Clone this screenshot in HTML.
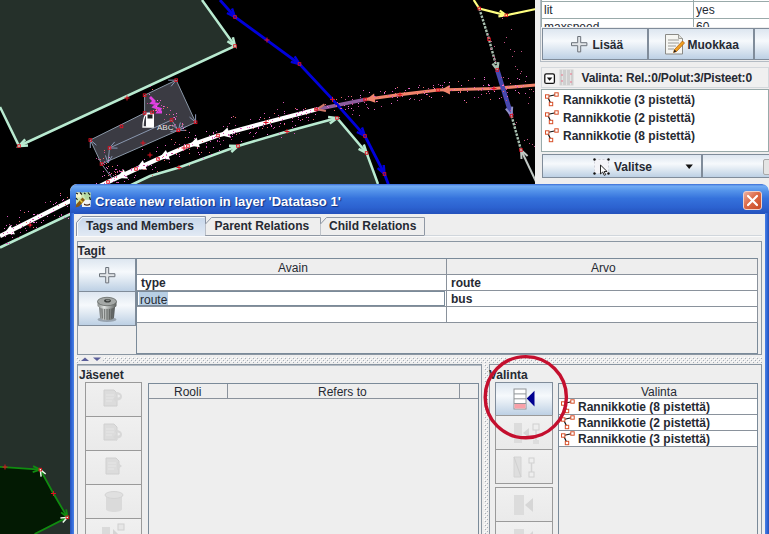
<!DOCTYPE html>
<html><head><meta charset="utf-8">
<style>
html,body{margin:0;padding:0;}
body{width:769px;height:534px;overflow:hidden;background:#000;position:relative;font-family:"Liberation Sans",sans-serif;font-size:12px;color:#262a33;}
.abs{position:absolute;}
#map{position:absolute;left:0;top:0;}
/* side panel */
#side{position:absolute;left:536px;top:0;width:233px;height:194px;background:#eeeeee;}
.btn{position:absolute;box-sizing:border-box;border:1px solid #808c9a;background:linear-gradient(#dde6f0 0%,#f6f9fc 40%,#e4ecf4 60%,#bdd0e4 100%);}
.btn.dis{background:linear-gradient(#f0f0f0,#eaeaea);border-color:#9a9a9a;}
.b{font-weight:bold;}
.t{position:absolute;white-space:nowrap;line-height:14px;}
/* dialog */
#dlg{position:absolute;left:70px;top:184px;width:699px;height:360px;background:#eeeeee;border-radius:7px 7px 0 0;overflow:hidden;}
#title{position:absolute;left:0;top:0;right:0;height:30px;border-radius:7px 7px 0 0;background:linear-gradient(#3a6cd4 0%,#72acf4 7%,#5594ea 22%,#3572dc 48%,#2c62d0 78%,#2452bc 100%);}
#bl{position:absolute;left:0;top:29px;width:4px;bottom:0;background:linear-gradient(90deg,#2450b8,#3068d8 50%,#4a80e4);}
#br{position:absolute;right:0;top:29px;width:4px;bottom:0;background:linear-gradient(90deg,#4a80e4,#3068d8 50%,#2450b8);}
.hline{position:absolute;height:1px;background:#8a929c;}
.vline{position:absolute;width:1px;background:#8a929c;}
.dots{background-color:#eeeeee;background-image:radial-gradient(#b4bcc6 0.7px,transparent 0.9px),radial-gradient(#fff 0.7px,transparent 0.9px);background-size:4px 4px,4px 4px;background-position:0 0,2px 2px;}
#side svg{z-index:3}
.white{position:absolute;background:#fff;}
</style></head><body>
<svg width="0" height="0" style="position:absolute"><defs>
<pattern id="bump" width="4" height="4" patternUnits="userSpaceOnUse"><rect width="4" height="4" fill="#eeeeee"/><rect x="0" y="0" width="1" height="1" fill="#ffffff"/><rect x="1" y="1" width="1" height="1" fill="#a4acb6"/><rect x="2" y="2" width="1" height="1" fill="#ffffff"/><rect x="3" y="3" width="1" height="1" fill="#a4acb6"/></pattern>
<g id="way"><path d="M3.500 4.500L12.500 2.500M3.500 4.500L7 12" stroke="#111" stroke-width="1.200" fill="none"/><rect x="1.500" y="2.800" width="3.400" height="3.400" fill="#fff" stroke="#d8502a" stroke-width="1"/><rect x="10.800" y="0.800" width="3.400" height="3.400" fill="#fff" stroke="#d8502a" stroke-width="1"/><rect x="5.300" y="10.300" width="3.400" height="3.400" fill="#fff" stroke="#d8502a" stroke-width="1"/></g>
<g id="pg"><path d="M1 2h10l3 3v13h-13z" fill="#dcdcdc" stroke="#d0d0d0" stroke-width="1"/><path d="M3 7h8M3 10h8M3 13h6" stroke="#e6e6e6"/></g>
<g id="plus"><path d="M6.700 0.500h3v6.200h6.200v3h-6.200v6.200h-3v-6.200h-6.200v-3h6.200z" fill="#e2e5e8" stroke="#6c727a" stroke-width="1"/></g>
</defs></svg>
<svg id="map" width="769" height="534" viewBox="0 0 769 534">
<rect width="769" height="534" fill="#000"/>
<polygon points="0,0 202,0 235,46 19,146 0,107" fill="#25302a"/>
<polygon points="0.0,247.5 150.0,176.0 179.0,167.5 238.0,146.0 287.0,131.5 337.0,118.0 366.6,153.0 378.0,184.0 378,534 0,534" fill="#25302a"/>
<polygon points="0,466.8 40.3,469.6 53.4,493.5 67.4,517.3 34.6,534 0,534" fill="#031a03"/>
<polygon points="90.3,140.0 144.6,113.0 144.6,95.2 176.2,80.1 195.6,122.3 178.4,130.3 101.5,164.0" fill="#3b3b43" stroke="#8a98a8" stroke-width="1"/>
<g stroke="#8a98b0" stroke-width="1" fill="none"><path d="M109.5 148L171.5 120M109.500 148L108 163M171.500 120L178.400 130.300M144.600 113L152 112M101.500 164L112 178"/></g>
<polyline points="117.5,148.1 109.5,148.0 114.7,141.9" fill="none" stroke="#8a98b8" stroke-width="1"/>
<polyline points="168.2,80.2 176.2,80.1 171.1,86.3" fill="none" stroke="#8a98b8" stroke-width="1"/>
<polyline points="195.6,114.3 195.6,122.3 189.5,117.1" fill="none" stroke="#8a98b8" stroke-width="1"/>
<polyline points="186.4,130.3 178.4,130.3 183.5,124.2" fill="none" stroke="#8a98b8" stroke-width="1"/>
<polyline points="90.3,148.0 90.3,140.0 96.4,145.1" fill="none" stroke="#8a98b8" stroke-width="1"/>
<polyline points="112.1,156.1 108.0,163.0 105.4,155.4" fill="none" stroke="#8a98b8" stroke-width="1"/>
<polyline points="185.6,126.8 178.4,130.3 180.4,122.5" fill="none" stroke="#8a98b8" stroke-width="1"/>
<polyline points="172.4,125.0 178.4,130.3 170.5,131.5" fill="none" stroke="#8a98b8" stroke-width="1"/>
<polyline points="202.0,0.0 235.0,46.0 19.0,146.0 0.0,107.0" fill="none" stroke="#b8ead0" stroke-width="2.5"/>
<polyline points="232.9,37.3 235.0,46.0 227.4,41.2" fill="none" stroke="#b8ead0" stroke-width="2.5"/>
<polyline points="28.0,145.6 19.0,146.0 25.2,139.4" fill="none" stroke="#b8ead0" stroke-width="2.5"/>
<polyline points="0.0,247.5 150.0,176.0 179.0,167.5 238.0,146.0 287.0,131.5 337.0,118.0 366.6,153.0 378.0,184.0" fill="none" stroke="#b8ead0" stroke-width="2.5"/>
<polyline points="229.0,145.7 238.0,146.0 231.3,152.0" fill="none" stroke="#b8ead0" stroke-width="2.5"/>
<polyline points="328.1,116.9 337.0,118.0 329.8,123.4" fill="none" stroke="#b8ead0" stroke-width="2.5"/>
<polyline points="363.8,144.5 366.6,153.0 358.6,148.8" fill="none" stroke="#b8ead0" stroke-width="2.5"/>
<polyline points="316.0,109.5 266.0,122.5 218.0,135.5 188.0,146.0 158.0,159.0 108.0,182.0 0.0,236.0" fill="none" stroke="#ffffff" stroke-width="4.2"/>
<polygon points="230.2,137.5 219.5,135.0 227.5,127.5" fill="#ffffff"/>
<polygon points="199.9,147.3 189.0,145.6 196.5,137.5" fill="#ffffff"/>
<polygon points="170.0,159.4 159.0,158.5 165.9,149.9" fill="#ffffff"/>
<polygon points="147.0,169.7 136.0,169.0 142.7,160.3" fill="#ffffff"/>
<polygon points="128.0,178.5 117.0,178.0 123.6,169.2" fill="#ffffff"/>
<polygon points="15.0,234.3 4.0,234.0 10.4,225.0" fill="#ffffff"/>
<polyline points="316,109.5 365,99.5" fill="none" stroke="#8c5c9c" stroke-width="3.6"/>
<polyline points="325.9,110.9 317.0,109.3 324.5,104.3" fill="none" stroke="#d07868" stroke-width="2"/>
<polyline points="536.0,85.0 494.0,88.5 438.0,90.0 400.0,94.7 365.0,99.5" fill="none" stroke="#f0846c" stroke-width="3.2"/>
<polygon points="450.0,94.4 441.0,90.0 449.7,85.1" fill="#f0846c"/>
<polygon points="375.4,102.8 366.0,99.4 374.1,93.5" fill="#f0846c"/>
<polyline points="220.0,0.0 235.0,17.0 299.5,64.0 332.5,99.4 365.0,136.0 384.5,174.0 389.0,186.0" fill="none" stroke="#0000dc" stroke-width="2.8"/>
<polyline points="232.0,8.5 235.0,17.0 227.0,13.0" fill="none" stroke="#0000dc" stroke-width="2.4"/>
<polyline points="294.7,56.4 299.5,64.0 290.8,61.8" fill="none" stroke="#0000dc" stroke-width="2.4"/>
<polyline points="362.0,127.5 365.0,136.0 356.9,132.0" fill="none" stroke="#0000dc" stroke-width="2.4"/>
<polyline points="383.7,165.0 384.5,174.0 377.7,168.1" fill="none" stroke="#0000dc" stroke-width="2.4"/>
<polyline points="473.7,0.0 479.3,8.5 506.3,15.3 536.0,9.0" fill="none" stroke="#ffff80" stroke-width="2.2"/>
<polyline points="499.8,10.6 506.3,15.3 498.4,16.4" fill="none" stroke="#ffff80" stroke-width="2.2"/>
<polyline points="479.3,8.5 489.0,39.3 497.3,70.0" fill="none" stroke="#a8c0b0" stroke-width="2.4" stroke-dasharray="2.5 1.2"/>
<polyline points="498.3,62.1 497.3,70.0 492.5,63.6" fill="none" stroke="#a8c0b0" stroke-width="2.4"/>
<polyline points="497.3,70 511.5,115.7" fill="none" stroke="#4848b0" stroke-width="4.5"/>
<polyline points="512.2,106.7 511.5,115.7 505.8,108.7" fill="none" stroke="#9090c8" stroke-width="2"/>
<polyline points="511.5,115.7 521.0,150.0" fill="none" stroke="#a8c0b0" stroke-width="2.4" stroke-dasharray="2.5 1.2"/>
<polyline points="540.0,190.0 521.0,150.0" fill="none" stroke="#c0c8c4" stroke-width="2"/>
<polyline points="521.5,159.0 521.0,150.0 527.6,156.1" fill="none" stroke="#c0c8c4" stroke-width="2"/>
<polyline points="0.0,466.8 40.3,469.6 53.4,493.5 67.4,517.3 34.6,534.0" fill="none" stroke="#108c10" stroke-width="1.8"/>
<polyline points="33.1,466.1 40.3,469.6 32.7,472.1" fill="none" stroke="#108c10" stroke-width="1.8"/>
<polyline points="66.2,509.4 67.4,517.3 61.1,512.4" fill="none" stroke="#108c10" stroke-width="1.8"/>
<polyline points="41.1,476.6 40.3,469.6 45.7,474.0" fill="none" stroke="#e8ffe8" stroke-width="1.5"/>
<polyline points="60.4,517.9 67.4,517.3 62.8,522.6" fill="none" stroke="#e8ffe8" stroke-width="1.5"/>
<path d="M150 97l4 4-2 2 5 1-3 3 6 2-2 3 4 0" fill="none" stroke="#e040e0" stroke-width="2.8"/>
<g><rect x="146" y="113" width="8" height="14" rx="1" fill="#fff"/><rect x="147.500" y="114.500" width="5" height="4" fill="#222"/><path d="M146 114q-3 5-3 13h11" fill="none" stroke="#fff" stroke-width="1.300"/></g>
<text x="157" y="130" font-family="Liberation Sans, sans-serif" font-size="8" fill="#e8e8e8">ABC</text>
<g><rect x="213" y="147" width="1" height="1" fill="#f070d0"/><rect x="288" y="114" width="1" height="1" fill="#c04890"/><rect x="296" y="114" width="1" height="1" fill="#e060c0"/><rect x="176" y="153" width="1" height="1" fill="#c04890"/><rect x="178" y="148" width="1" height="1" fill="#e86868"/><rect x="235" y="117" width="1" height="1" fill="#e86868"/><rect x="303" y="109" width="1" height="1" fill="#d050b0"/><rect x="271" y="126" width="1" height="1" fill="#f070d0"/><rect x="59" y="216" width="1" height="1" fill="#e060c0"/><rect x="298" y="117" width="1" height="1" fill="#f070d0"/><rect x="124" y="175" width="1" height="1" fill="#d050b0"/><rect x="62" y="200" width="1" height="1" fill="#d050b0"/><rect x="122" y="169" width="1" height="1" fill="#c04890"/><rect x="271" y="125" width="1" height="1" fill="#e060c0"/><rect x="265" y="123" width="1" height="1" fill="#e060c0"/><rect x="102" y="176" width="1" height="1" fill="#e060c0"/><rect x="36" y="227" width="1" height="1" fill="#e060c0"/><rect x="120" y="171" width="1" height="1" fill="#e86868"/><rect x="53" y="209" width="1" height="1" fill="#f070d0"/><rect x="116" y="182" width="1" height="1" fill="#c04890"/><rect x="217" y="141" width="1" height="1" fill="#c04890"/><rect x="306" y="112" width="1" height="1" fill="#e060c0"/><rect x="284" y="124" width="1" height="1" fill="#e86868"/><rect x="273" y="128" width="1" height="1" fill="#c04890"/><rect x="43" y="220" width="1" height="1" fill="#e060c0"/><rect x="144" y="159" width="1" height="1" fill="#e060c0"/><rect x="41" y="222" width="1" height="1" fill="#f070d0"/><rect x="206" y="131" width="1" height="1" fill="#f070d0"/><rect x="267" y="127" width="1" height="1" fill="#e86868"/><rect x="233" y="131" width="1" height="1" fill="#d050b0"/><rect x="234" y="133" width="1" height="1" fill="#e060c0"/><rect x="185" y="137" width="1" height="1" fill="#e86868"/><rect x="186" y="148" width="1" height="1" fill="#c04890"/><rect x="113" y="181" width="1" height="1" fill="#d050b0"/><rect x="249" y="133" width="1" height="1" fill="#c04890"/><rect x="301" y="114" width="1" height="1" fill="#d050b0"/><rect x="282" y="119" width="1" height="1" fill="#f070d0"/><rect x="37" y="214" width="1" height="1" fill="#d050b0"/><rect x="230" y="137" width="1" height="1" fill="#d050b0"/><rect x="283" y="102" width="1" height="1" fill="#d050b0"/><rect x="162" y="157" width="1" height="1" fill="#e060c0"/><rect x="280" y="123" width="1" height="1" fill="#f070d0"/><rect x="53" y="211" width="1" height="1" fill="#f070d0"/><rect x="13" y="228" width="1" height="1" fill="#e060c0"/><rect x="145" y="169" width="1" height="1" fill="#e86868"/><rect x="11" y="225" width="1" height="1" fill="#e060c0"/><rect x="228" y="135" width="1" height="1" fill="#e060c0"/><rect x="63" y="199" width="1" height="1" fill="#f070d0"/><rect x="209" y="152" width="1" height="1" fill="#e86868"/><rect x="9" y="224" width="1" height="1" fill="#c04890"/><rect x="55" y="203" width="1" height="1" fill="#e060c0"/><rect x="147" y="165" width="1" height="1" fill="#e060c0"/><rect x="306" y="117" width="1" height="1" fill="#d050b0"/><rect x="30" y="225" width="1" height="1" fill="#f070d0"/><rect x="197" y="148" width="1" height="1" fill="#e060c0"/><rect x="253" y="136" width="1" height="1" fill="#d050b0"/><rect x="33" y="214" width="1" height="1" fill="#f070d0"/><rect x="107" y="180" width="1" height="1" fill="#e86868"/><rect x="110" y="178" width="1" height="1" fill="#e86868"/><rect x="61" y="215" width="1" height="1" fill="#c04890"/><rect x="5" y="236" width="1" height="1" fill="#e060c0"/><rect x="16" y="224" width="1" height="1" fill="#c04890"/><rect x="279" y="133" width="1" height="1" fill="#f070d0"/><rect x="64" y="217" width="1" height="1" fill="#f070d0"/><rect x="4" y="228" width="1" height="1" fill="#f070d0"/><rect x="139" y="169" width="1" height="1" fill="#c04890"/><rect x="6" y="225" width="1" height="1" fill="#e060c0"/><rect x="12" y="232" width="1" height="1" fill="#f070d0"/><rect x="54" y="215" width="1" height="1" fill="#c04890"/><rect x="220" y="144" width="1" height="1" fill="#c04890"/><rect x="228" y="134" width="1" height="1" fill="#d050b0"/><rect x="25" y="228" width="1" height="1" fill="#c04890"/><rect x="131" y="169" width="1" height="1" fill="#d050b0"/><rect x="20" y="223" width="1" height="1" fill="#d050b0"/><rect x="151" y="165" width="1" height="1" fill="#e060c0"/><rect x="263" y="126" width="1" height="1" fill="#c04890"/><rect x="252" y="126" width="1" height="1" fill="#d050b0"/><rect x="134" y="177" width="1" height="1" fill="#e060c0"/><rect x="137" y="166" width="1" height="1" fill="#d050b0"/><rect x="135" y="175" width="1" height="1" fill="#d050b0"/><rect x="64" y="201" width="1" height="1" fill="#e060c0"/><rect x="114" y="177" width="1" height="1" fill="#e86868"/><rect x="166" y="154" width="1" height="1" fill="#f070d0"/><rect x="41" y="215" width="1" height="1" fill="#d050b0"/><rect x="143" y="165" width="1" height="1" fill="#c04890"/><rect x="274" y="127" width="1" height="1" fill="#e060c0"/><rect x="292" y="118" width="1" height="1" fill="#c04890"/><rect x="103" y="171" width="1" height="1" fill="#e060c0"/><rect x="264" y="113" width="1" height="1" fill="#e060c0"/><rect x="277" y="109" width="1" height="1" fill="#c04890"/><rect x="247" y="127" width="1" height="1" fill="#f070d0"/><rect x="165" y="158" width="1" height="1" fill="#f070d0"/><rect x="258" y="127" width="1" height="1" fill="#d050b0"/><rect x="206" y="146" width="1" height="1" fill="#c04890"/><rect x="176" y="154" width="1" height="1" fill="#e060c0"/><rect x="114" y="179" width="1" height="1" fill="#f070d0"/><rect x="7" y="216" width="1" height="1" fill="#d050b0"/><rect x="281" y="120" width="1" height="1" fill="#f070d0"/><rect x="67" y="206" width="1" height="1" fill="#d050b0"/><rect x="184" y="144" width="1" height="1" fill="#e060c0"/><rect x="236" y="145" width="1" height="1" fill="#d050b0"/><rect x="131" y="168" width="1" height="1" fill="#c04890"/><rect x="295" y="108" width="1" height="1" fill="#e86868"/><rect x="298" y="112" width="1" height="1" fill="#d050b0"/><rect x="68" y="213" width="1" height="1" fill="#c04890"/><rect x="297" y="109" width="1" height="1" fill="#d050b0"/><rect x="195" y="135" width="1" height="1" fill="#f070d0"/><rect x="231" y="139" width="1" height="1" fill="#c04890"/><rect x="239" y="133" width="1" height="1" fill="#c04890"/><rect x="300" y="120" width="1" height="1" fill="#d050b0"/><rect x="216" y="131" width="1" height="1" fill="#d050b0"/><rect x="155" y="167" width="1" height="1" fill="#e060c0"/><rect x="310" y="112" width="1" height="1" fill="#f070d0"/><rect x="163" y="156" width="1" height="1" fill="#e86868"/><rect x="51" y="212" width="1" height="1" fill="#f070d0"/><rect x="47" y="216" width="1" height="1" fill="#f070d0"/><rect x="50" y="201" width="1" height="1" fill="#d050b0"/><rect x="183" y="150" width="1" height="1" fill="#f070d0"/><rect x="279" y="126" width="1" height="1" fill="#c04890"/><rect x="232" y="134" width="1" height="1" fill="#e060c0"/><rect x="53" y="204" width="1" height="1" fill="#f070d0"/><rect x="223" y="140" width="1" height="1" fill="#c04890"/><rect x="169" y="162" width="1" height="1" fill="#c04890"/><rect x="240" y="128" width="1" height="1" fill="#e060c0"/><rect x="214" y="137" width="1" height="1" fill="#d050b0"/><rect x="186" y="146" width="1" height="1" fill="#e86868"/><rect x="249" y="127" width="1" height="1" fill="#e060c0"/><rect x="232" y="136" width="1" height="1" fill="#d050b0"/><rect x="306" y="114" width="1" height="1" fill="#e86868"/><rect x="235" y="125" width="1" height="1" fill="#c04890"/><rect x="34" y="222" width="1" height="1" fill="#f070d0"/><rect x="9" y="243" width="1" height="1" fill="#e060c0"/><rect x="28" y="211" width="1" height="1" fill="#f070d0"/><rect x="61" y="214" width="1" height="1" fill="#d050b0"/><rect x="156" y="151" width="1" height="1" fill="#f070d0"/><rect x="45" y="202" width="1" height="1" fill="#c04890"/><rect x="96" y="183" width="1" height="1" fill="#f070d0"/><rect x="308" y="117" width="1" height="1" fill="#d050b0"/><rect x="284" y="111" width="1" height="1" fill="#d050b0"/><rect x="109" y="172" width="1" height="1" fill="#e060c0"/><rect x="164" y="160" width="1" height="1" fill="#c04890"/><rect x="236" y="134" width="1" height="1" fill="#f070d0"/><rect x="3" y="233" width="1" height="1" fill="#c04890"/><rect x="157" y="147" width="1" height="1" fill="#d050b0"/><rect x="116" y="176" width="1" height="1" fill="#e060c0"/><rect x="267" y="134" width="1" height="1" fill="#f070d0"/><rect x="215" y="136" width="1" height="1" fill="#d050b0"/><rect x="295" y="125" width="1" height="1" fill="#e060c0"/><rect x="144" y="165" width="1" height="1" fill="#c04890"/><rect x="279" y="117" width="1" height="1" fill="#e86868"/><rect x="7" y="232" width="1" height="1" fill="#f070d0"/><rect x="171" y="139" width="1" height="1" fill="#e86868"/><rect x="169" y="159" width="1" height="1" fill="#d050b0"/><rect x="18" y="237" width="1" height="1" fill="#c04890"/><rect x="259" y="119" width="1" height="1" fill="#e060c0"/><rect x="274" y="113" width="1" height="1" fill="#e86868"/><rect x="34" y="214" width="1" height="1" fill="#f070d0"/><rect x="30" y="221" width="1" height="1" fill="#d050b0"/><rect x="310" y="110" width="1" height="1" fill="#f070d0"/><rect x="219" y="141" width="1" height="1" fill="#c04890"/><rect x="212" y="137" width="1" height="1" fill="#e060c0"/><rect x="20" y="210" width="1" height="1" fill="#c04890"/><rect x="217" y="140" width="1" height="1" fill="#d050b0"/><rect x="-3" y="232" width="1" height="1" fill="#f070d0"/><rect x="176" y="153" width="1" height="1" fill="#e86868"/><rect x="284" y="113" width="1" height="1" fill="#d050b0"/><rect x="20" y="232" width="1" height="1" fill="#d050b0"/><rect x="152" y="169" width="1" height="1" fill="#d050b0"/><rect x="19" y="221" width="1" height="1" fill="#e86868"/><rect x="121" y="171" width="1" height="1" fill="#d050b0"/><rect x="138" y="166" width="1" height="1" fill="#d050b0"/><rect x="26" y="230" width="1" height="1" fill="#d050b0"/><rect x="201" y="152" width="1" height="1" fill="#e86868"/><rect x="7" y="243" width="1" height="1" fill="#e060c0"/><rect x="213" y="133" width="1" height="1" fill="#e060c0"/><rect x="262" y="128" width="1" height="1" fill="#e86868"/><rect x="26" y="222" width="1" height="1" fill="#c04890"/><rect x="33" y="222" width="1" height="1" fill="#f070d0"/><rect x="270" y="124" width="1" height="1" fill="#d050b0"/><rect x="206" y="143" width="1" height="1" fill="#d050b0"/><rect x="223" y="126" width="1" height="1" fill="#d050b0"/><rect x="143" y="169" width="1" height="1" fill="#e86868"/><rect x="294" y="133" width="1" height="1" fill="#d050b0"/><rect x="268" y="120" width="1" height="1" fill="#e86868"/><rect x="43" y="220" width="1" height="1" fill="#f070d0"/><rect x="230" y="136" width="1" height="1" fill="#d050b0"/><rect x="19" y="217" width="1" height="1" fill="#e060c0"/><rect x="315" y="114" width="1" height="1" fill="#e060c0"/><rect x="26" y="222" width="1" height="1" fill="#e86868"/><rect x="308" y="120" width="1" height="1" fill="#c04890"/><rect x="60" y="195" width="1" height="1" fill="#e060c0"/><rect x="236" y="134" width="1" height="1" fill="#e86868"/><rect x="142" y="149" width="1" height="1" fill="#f070d0"/><rect x="166" y="155" width="1" height="1" fill="#f070d0"/><rect x="68" y="218" width="1" height="1" fill="#f070d0"/><rect x="229" y="123" width="1" height="1" fill="#c04890"/><rect x="284" y="123" width="1" height="1" fill="#e060c0"/><rect x="125" y="176" width="1" height="1" fill="#e060c0"/><rect x="126" y="176" width="1" height="1" fill="#c04890"/><rect x="172" y="153" width="1" height="1" fill="#c04890"/><rect x="32" y="219" width="1" height="1" fill="#d050b0"/><rect x="241" y="128" width="1" height="1" fill="#f070d0"/><rect x="219" y="138" width="1" height="1" fill="#d050b0"/><rect x="104" y="183" width="1" height="1" fill="#d050b0"/><rect x="302" y="119" width="1" height="1" fill="#e86868"/><rect x="6" y="243" width="1" height="1" fill="#f070d0"/><rect x="241" y="141" width="1" height="1" fill="#e060c0"/><rect x="223" y="133" width="1" height="1" fill="#d050b0"/><rect x="255" y="133" width="1" height="1" fill="#f070d0"/><rect x="189" y="165" width="1" height="1" fill="#e86868"/><rect x="270" y="122" width="1" height="1" fill="#e86868"/><rect x="194" y="138" width="1" height="1" fill="#e060c0"/><rect x="211" y="154" width="1" height="1" fill="#f070d0"/><rect x="189" y="149" width="1" height="1" fill="#e86868"/><rect x="263" y="124" width="1" height="1" fill="#c04890"/><rect x="202" y="141" width="1" height="1" fill="#e86868"/><rect x="12" y="237" width="1" height="1" fill="#e060c0"/><rect x="56" y="202" width="1" height="1" fill="#e060c0"/><rect x="296" y="115" width="1" height="1" fill="#f070d0"/><rect x="26" y="230" width="1" height="1" fill="#d050b0"/><rect x="36" y="222" width="1" height="1" fill="#f070d0"/><rect x="58" y="205" width="1" height="1" fill="#c04890"/><rect x="313" y="119" width="1" height="1" fill="#e86868"/><rect x="231" y="117" width="1" height="1" fill="#e060c0"/><rect x="203" y="158" width="1" height="1" fill="#f070d0"/><rect x="212" y="138" width="1" height="1" fill="#e060c0"/><rect x="20" y="228" width="1" height="1" fill="#c04890"/><rect x="171" y="153" width="1" height="1" fill="#c04890"/><rect x="189" y="153" width="1" height="1" fill="#e86868"/><rect x="158" y="158" width="1" height="1" fill="#e060c0"/><rect x="60" y="193" width="1" height="1" fill="#e86868"/><rect x="67" y="197" width="1" height="1" fill="#e86868"/><rect x="206" y="147" width="1" height="1" fill="#d050b0"/><rect x="292" y="127" width="1" height="1" fill="#e060c0"/><rect x="235" y="132" width="1" height="1" fill="#d050b0"/><rect x="39" y="218" width="1" height="1" fill="#e060c0"/><rect x="292" y="121" width="1" height="1" fill="#d050b0"/><rect x="175" y="142" width="1" height="1" fill="#e86868"/><rect x="278" y="115" width="1" height="1" fill="#d050b0"/><rect x="128" y="179" width="1" height="1" fill="#d050b0"/><rect x="250" y="132" width="1" height="1" fill="#e060c0"/><rect x="269" y="117" width="1" height="1" fill="#f070d0"/><rect x="198" y="152" width="1" height="1" fill="#f070d0"/><rect x="152" y="175" width="1" height="1" fill="#e86868"/><rect x="108" y="183" width="1" height="1" fill="#e060c0"/><rect x="165" y="145" width="1" height="1" fill="#e060c0"/><rect x="30" y="224" width="1" height="1" fill="#e060c0"/><rect x="281" y="137" width="1" height="1" fill="#d050b0"/><rect x="131" y="170" width="1" height="1" fill="#f070d0"/><rect x="38" y="217" width="1" height="1" fill="#e060c0"/><rect x="122" y="171" width="1" height="1" fill="#e86868"/><rect x="197" y="147" width="1" height="1" fill="#e86868"/><rect x="227" y="126" width="1" height="1" fill="#c04890"/><rect x="253" y="128" width="1" height="1" fill="#e86868"/><rect x="250" y="119" width="1" height="1" fill="#d050b0"/><rect x="298" y="119" width="1" height="1" fill="#c04890"/><rect x="137" y="166" width="1" height="1" fill="#e060c0"/><rect x="260" y="117" width="1" height="1" fill="#f070d0"/><rect x="219" y="150" width="1" height="1" fill="#e060c0"/><rect x="209" y="135" width="1" height="1" fill="#d050b0"/><rect x="189" y="132" width="1" height="1" fill="#e060c0"/><rect x="199" y="154" width="1" height="1" fill="#f070d0"/><rect x="258" y="128" width="1" height="1" fill="#e060c0"/><rect x="179" y="144" width="1" height="1" fill="#c04890"/><rect x="33" y="219" width="1" height="1" fill="#c04890"/><rect x="305" y="108" width="1" height="1" fill="#e86868"/><rect x="33" y="227" width="1" height="1" fill="#e86868"/><rect x="192" y="144" width="1" height="1" fill="#f070d0"/><rect x="213" y="132" width="1" height="1" fill="#e060c0"/><rect x="272" y="120" width="1" height="1" fill="#e060c0"/><rect x="11" y="234" width="1" height="1" fill="#e060c0"/><rect x="22" y="226" width="1" height="1" fill="#c04890"/><rect x="302" y="111" width="1" height="1" fill="#d050b0"/><rect x="24" y="212" width="1" height="1" fill="#e86868"/><rect x="264" y="118" width="1" height="1" fill="#e86868"/><rect x="188" y="137" width="1" height="1" fill="#d050b0"/><rect x="256" y="132" width="1" height="1" fill="#d050b0"/><rect x="146" y="166" width="1" height="1" fill="#d050b0"/><rect x="233" y="116" width="1" height="1" fill="#e86868"/><rect x="296" y="109" width="1" height="1" fill="#c04890"/><rect x="304" y="110" width="1" height="1" fill="#c04890"/><rect x="117" y="172" width="1" height="1" fill="#d050b0"/><rect x="210" y="141" width="1" height="1" fill="#e060c0"/><rect x="174" y="144" width="1" height="1" fill="#c04890"/><rect x="179" y="154" width="1" height="1" fill="#c04890"/><rect x="157" y="171" width="1" height="1" fill="#e86868"/><rect x="65" y="204" width="1" height="1" fill="#e86868"/><rect x="164" y="160" width="1" height="1" fill="#e86868"/><rect x="179" y="156" width="1" height="1" fill="#e060c0"/><rect x="427" y="94" width="1" height="1" fill="#c04890"/><rect x="517" y="78" width="1" height="1" fill="#e060c0"/><rect x="426" y="94" width="1" height="1" fill="#f070d0"/><rect x="454" y="89" width="1" height="1" fill="#f070d0"/><rect x="352" y="103" width="1" height="1" fill="#c04890"/><rect x="359" y="115" width="1" height="1" fill="#d050b0"/><rect x="434" y="88" width="1" height="1" fill="#f070d0"/><rect x="501" y="77" width="1" height="1" fill="#c04890"/><rect x="519" y="93" width="1" height="1" fill="#e86868"/><rect x="503" y="85" width="1" height="1" fill="#f070d0"/><rect x="358" y="106" width="1" height="1" fill="#c04890"/><rect x="334" y="110" width="1" height="1" fill="#e86868"/><rect x="424" y="93" width="1" height="1" fill="#e060c0"/><rect x="499" y="98" width="1" height="1" fill="#f070d0"/><rect x="387" y="95" width="1" height="1" fill="#e86868"/><rect x="366" y="104" width="1" height="1" fill="#d050b0"/><rect x="391" y="103" width="1" height="1" fill="#f070d0"/><rect x="408" y="88" width="1" height="1" fill="#d050b0"/><rect x="517" y="87" width="1" height="1" fill="#c04890"/><rect x="449" y="86" width="1" height="1" fill="#e060c0"/><rect x="316" y="107" width="1" height="1" fill="#f070d0"/><rect x="365" y="100" width="1" height="1" fill="#e060c0"/><rect x="377" y="101" width="1" height="1" fill="#e86868"/><rect x="474" y="78" width="1" height="1" fill="#d050b0"/><rect x="405" y="90" width="1" height="1" fill="#e060c0"/><rect x="397" y="97" width="1" height="1" fill="#f070d0"/><rect x="340" y="108" width="1" height="1" fill="#c04890"/><rect x="392" y="96" width="1" height="1" fill="#d050b0"/><rect x="460" y="92" width="1" height="1" fill="#e86868"/><rect x="483" y="85" width="1" height="1" fill="#e060c0"/><rect x="488" y="85" width="1" height="1" fill="#d050b0"/><rect x="508" y="86" width="1" height="1" fill="#d050b0"/><rect x="507" y="92" width="1" height="1" fill="#c04890"/><rect x="345" y="99" width="1" height="1" fill="#c04890"/><rect x="482" y="89" width="1" height="1" fill="#c04890"/><rect x="409" y="99" width="1" height="1" fill="#e060c0"/><rect x="442" y="87" width="1" height="1" fill="#e060c0"/><rect x="482" y="88" width="1" height="1" fill="#e060c0"/><rect x="417" y="94" width="1" height="1" fill="#e86868"/><rect x="523" y="85" width="1" height="1" fill="#f070d0"/><rect x="416" y="92" width="1" height="1" fill="#e86868"/><rect x="489" y="85" width="1" height="1" fill="#f070d0"/><rect x="395" y="93" width="1" height="1" fill="#e86868"/><rect x="467" y="91" width="1" height="1" fill="#e060c0"/><rect x="341" y="97" width="1" height="1" fill="#e86868"/><rect x="433" y="85" width="1" height="1" fill="#e060c0"/><rect x="488" y="91" width="1" height="1" fill="#f070d0"/><rect x="525" y="93" width="1" height="1" fill="#e060c0"/><rect x="385" y="91" width="1" height="1" fill="#e86868"/><rect x="474" y="87" width="1" height="1" fill="#e060c0"/><rect x="360" y="100" width="1" height="1" fill="#c04890"/><rect x="396" y="95" width="1" height="1" fill="#d050b0"/><rect x="344" y="105" width="1" height="1" fill="#e060c0"/><rect x="484" y="77" width="1" height="1" fill="#f070d0"/><rect x="368" y="108" width="1" height="1" fill="#e060c0"/><rect x="464" y="100" width="1" height="1" fill="#f070d0"/><rect x="395" y="88" width="1" height="1" fill="#f070d0"/><rect x="315" y="110" width="1" height="1" fill="#d050b0"/><rect x="384" y="93" width="1" height="1" fill="#e060c0"/><rect x="374" y="96" width="1" height="1" fill="#e060c0"/><rect x="488" y="87" width="1" height="1" fill="#e86868"/><rect x="336" y="106" width="1" height="1" fill="#e86868"/><rect x="515" y="85" width="1" height="1" fill="#f070d0"/><rect x="506" y="88" width="1" height="1" fill="#e060c0"/><rect x="380" y="91" width="1" height="1" fill="#c04890"/><rect x="377" y="101" width="1" height="1" fill="#e86868"/><rect x="458" y="81" width="1" height="1" fill="#e86868"/><rect x="345" y="109" width="1" height="1" fill="#d050b0"/><rect x="336" y="105" width="1" height="1" fill="#c04890"/><rect x="491" y="89" width="1" height="1" fill="#e060c0"/><rect x="351" y="96" width="1" height="1" fill="#e86868"/><rect x="352" y="99" width="1" height="1" fill="#d050b0"/><rect x="518" y="92" width="1" height="1" fill="#f070d0"/><rect x="489" y="93" width="1" height="1" fill="#c04890"/><rect x="531" y="89" width="1" height="1" fill="#e86868"/><rect x="376" y="101" width="1" height="1" fill="#f070d0"/><rect x="318" y="108" width="1" height="1" fill="#f070d0"/><rect x="402" y="96" width="1" height="1" fill="#d050b0"/><rect x="440" y="85" width="1" height="1" fill="#e060c0"/><rect x="378" y="97" width="1" height="1" fill="#e86868"/><rect x="351" y="108" width="1" height="1" fill="#f070d0"/><rect x="500" y="88" width="1" height="1" fill="#c04890"/><rect x="368" y="99" width="1" height="1" fill="#e86868"/><rect x="422" y="92" width="1" height="1" fill="#e86868"/><rect x="492" y="89" width="1" height="1" fill="#d050b0"/><rect x="352" y="114" width="1" height="1" fill="#c04890"/><rect x="474" y="97" width="1" height="1" fill="#d050b0"/><rect x="429" y="96" width="1" height="1" fill="#e86868"/><rect x="519" y="79" width="1" height="1" fill="#f070d0"/><rect x="360" y="97" width="1" height="1" fill="#c04890"/><rect x="442" y="96" width="1" height="1" fill="#e86868"/><rect x="517" y="86" width="1" height="1" fill="#f070d0"/><rect x="490" y="99" width="1" height="1" fill="#e86868"/><rect x="421" y="99" width="1" height="1" fill="#c04890"/><rect x="481" y="90" width="1" height="1" fill="#c04890"/><rect x="369" y="92" width="1" height="1" fill="#f070d0"/><rect x="458" y="92" width="1" height="1" fill="#e060c0"/><rect x="348" y="96" width="1" height="1" fill="#d050b0"/><rect x="494" y="91" width="1" height="1" fill="#f070d0"/><rect x="410" y="98" width="1" height="1" fill="#d050b0"/><rect x="341" y="108" width="1" height="1" fill="#d050b0"/><rect x="468" y="80" width="1" height="1" fill="#e86868"/><rect x="503" y="91" width="1" height="1" fill="#e86868"/><rect x="462" y="89" width="1" height="1" fill="#c04890"/><rect x="466" y="102" width="1" height="1" fill="#e86868"/><rect x="381" y="106" width="1" height="1" fill="#c04890"/><rect x="507" y="96" width="1" height="1" fill="#e060c0"/><rect x="360" y="95" width="1" height="1" fill="#f070d0"/><rect x="492" y="87" width="1" height="1" fill="#d050b0"/><rect x="490" y="89" width="1" height="1" fill="#d050b0"/><rect x="449" y="82" width="1" height="1" fill="#f070d0"/><rect x="423" y="87" width="1" height="1" fill="#e86868"/><rect x="502" y="85" width="1" height="1" fill="#f070d0"/><rect x="375" y="96" width="1" height="1" fill="#c04890"/><rect x="409" y="88" width="1" height="1" fill="#f070d0"/><rect x="484" y="79" width="1" height="1" fill="#f070d0"/><rect x="363" y="90" width="1" height="1" fill="#d050b0"/><rect x="384" y="92" width="1" height="1" fill="#f070d0"/><rect x="466" y="88" width="1" height="1" fill="#e060c0"/><rect x="444" y="82" width="1" height="1" fill="#e060c0"/><rect x="397" y="100" width="1" height="1" fill="#d050b0"/><rect x="433" y="87" width="1" height="1" fill="#e86868"/><rect x="389" y="95" width="1" height="1" fill="#e060c0"/><rect x="392" y="91" width="1" height="1" fill="#e86868"/><rect x="428" y="91" width="1" height="1" fill="#f070d0"/><rect x="419" y="100" width="1" height="1" fill="#c04890"/><rect x="328" y="107" width="1" height="1" fill="#e060c0"/><rect x="404" y="92" width="1" height="1" fill="#e86868"/><rect x="419" y="85" width="1" height="1" fill="#c04890"/><rect x="414" y="99" width="1" height="1" fill="#c04890"/><rect x="488" y="84" width="1" height="1" fill="#f070d0"/><rect x="374" y="109" width="1" height="1" fill="#e060c0"/><rect x="460" y="91" width="1" height="1" fill="#e86868"/><rect x="451" y="90" width="1" height="1" fill="#d050b0"/><rect x="442" y="85" width="1" height="1" fill="#d050b0"/><rect x="478" y="97" width="1" height="1" fill="#c04890"/><rect x="327" y="106" width="1" height="1" fill="#f070d0"/><rect x="358" y="103" width="1" height="1" fill="#f070d0"/><rect x="508" y="78" width="1" height="1" fill="#d050b0"/><rect x="392" y="97" width="1" height="1" fill="#d050b0"/><rect x="489" y="88" width="1" height="1" fill="#e86868"/><rect x="397" y="87" width="1" height="1" fill="#e86868"/><rect x="431" y="97" width="1" height="1" fill="#f070d0"/><rect x="510" y="83" width="1" height="1" fill="#e86868"/><rect x="348" y="108" width="1" height="1" fill="#e060c0"/><rect x="478" y="90" width="1" height="1" fill="#c04890"/><rect x="535" y="81" width="1" height="1" fill="#f070d0"/><rect x="481" y="94" width="1" height="1" fill="#d050b0"/><rect x="438" y="84" width="1" height="1" fill="#c04890"/><rect x="461" y="85" width="1" height="1" fill="#e060c0"/><rect x="526" y="76" width="1" height="1" fill="#e060c0"/><rect x="367" y="107" width="1" height="1" fill="#c04890"/><rect x="397" y="95" width="1" height="1" fill="#e86868"/><rect x="325" y="104" width="1" height="1" fill="#e86868"/><rect x="515" y="90" width="1" height="1" fill="#e060c0"/><rect x="364" y="102" width="1" height="1" fill="#c04890"/><rect x="337" y="102" width="1" height="1" fill="#c04890"/><rect x="336" y="99" width="1" height="1" fill="#e86868"/><rect x="392" y="91" width="1" height="1" fill="#d050b0"/><rect x="353" y="110" width="1" height="1" fill="#c04890"/><rect x="418" y="87" width="1" height="1" fill="#f070d0"/><rect x="339" y="103" width="1" height="1" fill="#e86868"/><rect x="486" y="93" width="1" height="1" fill="#e86868"/><rect x="521" y="87" width="1" height="1" fill="#e060c0"/><rect x="424" y="91" width="1" height="1" fill="#c04890"/><rect x="352" y="104" width="1" height="1" fill="#c04890"/><rect x="428" y="88" width="1" height="1" fill="#c04890"/><rect x="348" y="106" width="1" height="1" fill="#f070d0"/><rect x="183" y="128" width="1" height="1" fill="#f070d0"/><rect x="174" y="117" width="1" height="1" fill="#f070d0"/><rect x="173" y="114" width="1" height="1" fill="#f070d0"/><rect x="175" y="124" width="1" height="1" fill="#c04890"/><rect x="182" y="124" width="1" height="1" fill="#e86868"/><rect x="165" y="125" width="1" height="1" fill="#e86868"/><rect x="156" y="109" width="1" height="1" fill="#e86868"/><rect x="174" y="125" width="1" height="1" fill="#c04890"/><rect x="156" y="106" width="1" height="1" fill="#f070d0"/><rect x="160" y="100" width="1" height="1" fill="#e060c0"/><rect x="164" y="119" width="1" height="1" fill="#c04890"/><rect x="176" y="116" width="1" height="1" fill="#c04890"/><rect x="158" y="111" width="1" height="1" fill="#c04890"/><rect x="163" y="106" width="1" height="1" fill="#f070d0"/><rect x="150" y="86" width="1" height="1" fill="#d050b0"/><rect x="169" y="114" width="1" height="1" fill="#e86868"/><rect x="153" y="110" width="1" height="1" fill="#f070d0"/><rect x="164" y="106" width="1" height="1" fill="#d050b0"/><rect x="173" y="117" width="1" height="1" fill="#c04890"/><rect x="167" y="107" width="1" height="1" fill="#e86868"/><rect x="171" y="125" width="1" height="1" fill="#c04890"/><rect x="163" y="108" width="1" height="1" fill="#e86868"/><rect x="161" y="105" width="1" height="1" fill="#d050b0"/><rect x="175" y="118" width="1" height="1" fill="#e060c0"/><rect x="176" y="113" width="1" height="1" fill="#f070d0"/><rect x="156" y="110" width="1" height="1" fill="#f070d0"/><rect x="155" y="110" width="1" height="1" fill="#e86868"/><rect x="182" y="126" width="1" height="1" fill="#d050b0"/><rect x="156" y="106" width="1" height="1" fill="#f070d0"/><rect x="170" y="110" width="1" height="1" fill="#d050b0"/><rect x="147" y="103" width="1" height="1" fill="#c04890"/><rect x="182" y="123" width="1" height="1" fill="#e060c0"/><rect x="166" y="114" width="1" height="1" fill="#e060c0"/><rect x="157" y="104" width="1" height="1" fill="#e060c0"/><rect x="149" y="94" width="1" height="1" fill="#f070d0"/><rect x="185" y="130" width="1" height="1" fill="#e86868"/><rect x="159" y="102" width="1" height="1" fill="#c04890"/><rect x="157" y="100" width="1" height="1" fill="#f070d0"/><rect x="152" y="89" width="1" height="1" fill="#e86868"/><rect x="175" y="119" width="1" height="1" fill="#f070d0"/><rect x="112" y="166" width="1" height="1" fill="#e86868"/><rect x="115" y="174" width="1" height="1" fill="#e86868"/><rect x="114" y="171" width="1" height="1" fill="#c04890"/><rect x="106" y="163" width="1" height="1" fill="#e86868"/><rect x="116" y="177" width="1" height="1" fill="#e86868"/><rect x="104" y="164" width="1" height="1" fill="#c04890"/><rect x="117" y="182" width="1" height="1" fill="#c04890"/><rect x="104" y="161" width="1" height="1" fill="#c04890"/><rect x="104" y="175" width="1" height="1" fill="#f070d0"/><rect x="120" y="171" width="1" height="1" fill="#e060c0"/><rect x="115" y="172" width="1" height="1" fill="#e86868"/><rect x="116" y="169" width="1" height="1" fill="#f070d0"/><rect x="119" y="171" width="1" height="1" fill="#c04890"/><rect x="111" y="178" width="1" height="1" fill="#e060c0"/><rect x="117" y="165" width="1" height="1" fill="#e060c0"/><rect x="108" y="166" width="1" height="1" fill="#e86868"/><rect x="103" y="163" width="1" height="1" fill="#d050b0"/><rect x="124" y="181" width="1" height="1" fill="#e060c0"/><rect x="119" y="170" width="1" height="1" fill="#c04890"/><rect x="109" y="157" width="1" height="1" fill="#f070d0"/><rect x="117" y="171" width="1" height="1" fill="#e86868"/><rect x="96" y="158" width="1" height="1" fill="#c04890"/><rect x="104" y="150" width="1" height="1" fill="#e86868"/><rect x="100" y="159" width="1" height="1" fill="#e86868"/><rect x="110" y="174" width="1" height="1" fill="#d050b0"/><rect x="116" y="169" width="1" height="1" fill="#d050b0"/><rect x="104" y="152" width="1" height="1" fill="#c04890"/><rect x="98" y="159" width="1" height="1" fill="#c04890"/><rect x="114" y="177" width="1" height="1" fill="#c04890"/><rect x="113" y="175" width="1" height="1" fill="#c04890"/><rect x="103" y="158" width="1" height="1" fill="#e86868"/><rect x="108" y="175" width="1" height="1" fill="#e86868"/><rect x="115" y="169" width="1" height="1" fill="#f070d0"/><rect x="111" y="173" width="1" height="1" fill="#e86868"/><rect x="118" y="182" width="1" height="1" fill="#e060c0"/><rect x="106" y="167" width="1" height="1" fill="#d050b0"/><rect x="108" y="160" width="1" height="1" fill="#f070d0"/><rect x="107" y="168" width="1" height="1" fill="#f070d0"/></g>
<g><rect x="503" y="84" width="1" height="1" fill="#c05080"/><rect x="494" y="57" width="1" height="1" fill="#c05080"/><rect x="503" y="77" width="1" height="1" fill="#c05080"/><rect x="532" y="144" width="1" height="1" fill="#c05080"/><rect x="524" y="140" width="1" height="1" fill="#c05080"/><rect x="506" y="89" width="1" height="1" fill="#c05080"/><rect x="490" y="49" width="1" height="1" fill="#c05080"/><rect x="516" y="122" width="1" height="1" fill="#c05080"/><rect x="488" y="34" width="1" height="1" fill="#c05080"/><rect x="529" y="143" width="1" height="1" fill="#c05080"/><rect x="491" y="41" width="1" height="1" fill="#c05080"/><rect x="515" y="124" width="1" height="1" fill="#c05080"/><rect x="527" y="139" width="1" height="1" fill="#c05080"/><rect x="495" y="61" width="1" height="1" fill="#c05080"/><rect x="506" y="100" width="1" height="1" fill="#c05080"/><rect x="494" y="46" width="1" height="1" fill="#c05080"/><rect x="501" y="97" width="1" height="1" fill="#c05080"/><rect x="510" y="110" width="1" height="1" fill="#c05080"/><rect x="494" y="59" width="1" height="1" fill="#c05080"/><rect x="487" y="37" width="1" height="1" fill="#c05080"/><rect x="534" y="146" width="1" height="1" fill="#c05080"/><rect x="512" y="113" width="1" height="1" fill="#c05080"/><rect x="503" y="84" width="1" height="1" fill="#c05080"/><rect x="491" y="48" width="1" height="1" fill="#c05080"/><rect x="493" y="56" width="1" height="1" fill="#c05080"/><rect x="503" y="16" width="1" height="1" fill="#c05080"/><rect x="515" y="66" width="1" height="1" fill="#c05080"/><rect x="521" y="71" width="1" height="1" fill="#c05080"/><rect x="514" y="51" width="1" height="1" fill="#c05080"/><rect x="533" y="91" width="1" height="1" fill="#c05080"/><rect x="521" y="51" width="1" height="1" fill="#c05080"/><rect x="512" y="56" width="1" height="1" fill="#c05080"/><rect x="529" y="97" width="1" height="1" fill="#c05080"/><rect x="528" y="103" width="1" height="1" fill="#c05080"/><rect x="517" y="69" width="1" height="1" fill="#c05080"/><rect x="510" y="49" width="1" height="1" fill="#c05080"/><rect x="502" y="18" width="1" height="1" fill="#c05080"/><rect x="506" y="37" width="1" height="1" fill="#c05080"/><rect x="525" y="81" width="1" height="1" fill="#c05080"/><rect x="529" y="89" width="1" height="1" fill="#c05080"/><rect x="504" y="42" width="1" height="1" fill="#c05080"/><rect x="520" y="73" width="1" height="1" fill="#c05080"/><rect x="511" y="29" width="1" height="1" fill="#c05080"/></g>
<rect x="233.7" y="44.7" width="2.6" height="2.6" fill="none" stroke="#e01020" stroke-width="0.9"/>
<rect x="17.7" y="144.7" width="2.6" height="2.6" fill="none" stroke="#e01020" stroke-width="0.9"/>
<rect x="233.7" y="15.7" width="2.6" height="2.6" fill="none" stroke="#e01020" stroke-width="0.9"/>
<rect x="298.2" y="62.7" width="2.6" height="2.6" fill="none" stroke="#e01020" stroke-width="0.9"/>
<rect x="363.7" y="134.7" width="2.6" height="2.6" fill="none" stroke="#e01020" stroke-width="0.9"/>
<rect x="383.2" y="172.7" width="2.6" height="2.6" fill="none" stroke="#e01020" stroke-width="0.9"/>
<rect x="236.7" y="144.7" width="2.6" height="2.6" fill="none" stroke="#e01020" stroke-width="0.9"/>
<rect x="335.7" y="116.7" width="2.6" height="2.6" fill="none" stroke="#e01020" stroke-width="0.9"/>
<rect x="365.3" y="151.7" width="2.6" height="2.6" fill="none" stroke="#e01020" stroke-width="0.9"/>
<rect x="216.7" y="134.2" width="2.6" height="2.6" fill="none" stroke="#e01020" stroke-width="0.9"/>
<rect x="186.7" y="144.7" width="2.6" height="2.6" fill="none" stroke="#e01020" stroke-width="0.9"/>
<rect x="156.7" y="157.7" width="2.6" height="2.6" fill="none" stroke="#e01020" stroke-width="0.9"/>
<rect x="314.7" y="108.2" width="2.6" height="2.6" fill="none" stroke="#e01020" stroke-width="0.9"/>
<rect x="363.7" y="98.2" width="2.6" height="2.6" fill="none" stroke="#e01020" stroke-width="0.9"/>
<rect x="436.7" y="88.7" width="2.6" height="2.6" fill="none" stroke="#e01020" stroke-width="0.9"/>
<rect x="478.0" y="7.2" width="2.6" height="2.6" fill="none" stroke="#e01020" stroke-width="0.9"/>
<rect x="505.0" y="14.0" width="2.6" height="2.6" fill="none" stroke="#e01020" stroke-width="0.9"/>
<rect x="487.7" y="38.0" width="2.6" height="2.6" fill="none" stroke="#e01020" stroke-width="0.9"/>
<rect x="496.0" y="68.7" width="2.6" height="2.6" fill="none" stroke="#e01020" stroke-width="0.9"/>
<rect x="510.2" y="114.4" width="2.6" height="2.6" fill="none" stroke="#e01020" stroke-width="0.9"/>
<rect x="519.7" y="148.7" width="2.6" height="2.6" fill="none" stroke="#e01020" stroke-width="0.9"/>
<rect x="106.7" y="180.7" width="2.6" height="2.6" fill="none" stroke="#e01020" stroke-width="0.9"/>
<rect x="134.7" y="167.7" width="2.6" height="2.6" fill="none" stroke="#e01020" stroke-width="0.9"/>
<rect x="39.0" y="468.3" width="2.6" height="2.6" fill="none" stroke="#e01020" stroke-width="0.9"/>
<rect x="66.1" y="516.0" width="2.6" height="2.6" fill="none" stroke="#e01020" stroke-width="0.9"/>
<rect x="89.0" y="138.7" width="2.6" height="2.6" fill="none" stroke="#e01020" stroke-width="0.9"/>
<rect x="143.3" y="111.7" width="2.6" height="2.6" fill="none" stroke="#e01020" stroke-width="0.9"/>
<rect x="143.3" y="93.9" width="2.6" height="2.6" fill="none" stroke="#e01020" stroke-width="0.9"/>
<rect x="174.9" y="78.8" width="2.6" height="2.6" fill="none" stroke="#e01020" stroke-width="0.9"/>
<rect x="194.3" y="121.0" width="2.6" height="2.6" fill="none" stroke="#e01020" stroke-width="0.9"/>
<rect x="177.1" y="129.0" width="2.6" height="2.6" fill="none" stroke="#e01020" stroke-width="0.9"/>
<rect x="100.2" y="162.7" width="2.6" height="2.6" fill="none" stroke="#e01020" stroke-width="0.9"/>
<rect x="108.2" y="146.7" width="2.6" height="2.6" fill="none" stroke="#e01020" stroke-width="0.9"/>
<rect x="170.2" y="118.7" width="2.6" height="2.6" fill="none" stroke="#e01020" stroke-width="0.9"/>
<rect x="177.1" y="129.0" width="2.6" height="2.6" fill="none" stroke="#e01020" stroke-width="0.9"/>
<rect x="120.2" y="125.1" width="2.6" height="2.6" fill="none" stroke="#e01020" stroke-width="0.9"/>
<rect x="150.7" y="111.1" width="2.6" height="2.6" fill="none" stroke="#e01020" stroke-width="0.9"/>
<path d="M263.5 122.5h5M266.0 120.0v5" stroke="#e01020" stroke-width="1"/>
<path d="M284.5 131.5h5M287.0 129.0v5" stroke="#e01020" stroke-width="1"/>
<path d="M176.5 167.5h5M179.0 165.0v5" stroke="#e01020" stroke-width="1"/>
<path d="M330.0 99.4h5M332.5 96.9v5" stroke="#e01020" stroke-width="1"/>
<path d="M264.5 40.0h5M267.0 37.5v5" stroke="#e01020" stroke-width="1"/>
<path d="M397.5 94.7h5M400.0 92.2v5" stroke="#e01020" stroke-width="1"/>
<path d="M491.5 88.5h5M494.0 86.0v5" stroke="#e01020" stroke-width="1"/>
<path d="M124.5 98.0h5M127.0 95.5v5" stroke="#e01020" stroke-width="1"/>
<path d="M50.9 493.5h5M53.4 491.0v5" stroke="#e01020" stroke-width="1"/>
<path d="M2.5 467.0h5M5.0 464.5v5" stroke="#e01020" stroke-width="1"/>
<path d="M82.5 196.0h5M85.0 193.5v5" stroke="#e01020" stroke-width="1"/>
<path d="M27.5 225.0h5M30.0 222.5v5" stroke="#e01020" stroke-width="1"/>
<path d="M137.5 186.0h5M140.0 183.5v5" stroke="#e01020" stroke-width="1"/>
<path d="M140.5 143.0h5M143.0 140.5v5" stroke="#e01020" stroke-width="1"/>
<path d="M147.5 155.0h5M150.0 152.5v5" stroke="#e01020" stroke-width="1"/>
<path d="M181.5 148.0h5M184.0 145.5v5" stroke="#e01020" stroke-width="1"/>
</svg>

<div class="abs" style="left:535px;top:0;width:2px;height:185px;background:#eeeeee"></div>
<div id="side">
 <div class="white" style="left:5px;top:0;width:228px;height:27px;"></div>
 <div class="hline" style="left:5px;top:1px;width:228px;background:#9aa"></div>
 <div class="hline" style="left:5px;top:18px;width:228px;background:#9aa"></div>
 <div class="vline" style="left:157px;top:0;height:27px;background:#9aa"></div>
 <div class="vline" style="left:5px;top:0;height:27px;background:#9aa"></div>
 <div class="t" style="left:8px;top:3px;font-size:12px;">lit</div>
 <div class="t" style="left:160px;top:3px;font-size:12px;">yes</div>
 <div class="abs" style="left:6px;top:19px;width:222px;height:8px;overflow:hidden;"><div class="t" style="left:2px;top:1px;">maxspeed</div><div class="t" style="left:154px;top:1px;">60</div></div>
 <div class="abs" style="left:4px;top:0;width:240px;height:62px;border:1px solid #b4bcc4;border-top:none;box-sizing:border-box;"></div>
 <div class="btn" style="left:6px;top:28px;width:106px;height:32px;"></div>
 <div class="btn" style="left:112px;top:28px;width:106px;height:32px;"></div>
 <div class="btn" style="left:218px;top:28px;width:30px;height:32px;"></div>
 <div class="t b" style="left:56.5px;top:38px;">Lisää</div>
 <div class="t b" style="left:151.5px;top:38px;">Muokkaa</div>
 <svg class="abs" style="left:35px;top:35.5px" width="17" height="17"><use href="#plus"/></svg>
 <svg class="abs" style="left:128px;top:32px" width="24" height="24"><path d="M1.5 2.5h13l4 4v15.5h-17z" fill="#f6f6f2" stroke="#8a8a86" stroke-width="1"/><path d="M14.5 2.5v4h4" fill="#e0e0da" stroke="#8a8a86" stroke-width="0.8"/><path d="M4 8h11M4 11h11M4 14h8M4 17h6" stroke="#9a9a96" stroke-width="1"/><path d="M10.5 17.5l8-8.5 2 2-8 8.5-3 1z" fill="#f0a020" stroke="#b06010" stroke-width="0.8"/><path d="M9.6 20.4l0.9-2.9 2 2z" fill="#222"/></svg>
 <svg class="abs" style="left:8px;top:73px" width="12" height="12"><rect x="0.8" y="0.8" width="9.6" height="9.6" rx="1.5" fill="#fff" stroke="#111" stroke-width="1.3"/><path d="M2.8 4.5h5.6l-2.8 3.2z" fill="#111"/></svg>
 <svg class="abs" style="left:23px;top:69px" width="16" height="18"><rect x="0.500" y="0.500" width="14" height="16" fill="#cfcfcf"/><path d="M3.500 0.500v16M7.500 0.500v16M11.500 0.500v16" stroke="#e4e4e4"/><circle cx="3" cy="6" r="0.9" fill="#e890a0"/><circle cx="3" cy="12" r="0.9" fill="#e890a0"/><circle cx="12" cy="5" r="0.9" fill="#e890a0"/><circle cx="12" cy="13" r="0.9" fill="#e890a0"/></svg>
 <svg class="abs" style="left:8px;top:92px" width="16" height="16"><use href="#way"/></svg>
 <svg class="abs" style="left:8px;top:110px" width="16" height="16"><use href="#way"/></svg>
 <svg class="abs" style="left:8px;top:128px" width="16" height="16"><use href="#way"/></svg>
 <svg class="abs" style="left:56px;top:156.5px" width="20" height="20"><rect x="2.5" y="2.5" width="14" height="14" fill="#f4f4f8" stroke="#c8c8d0" stroke-width="0.8" stroke-dasharray="2 2"/><circle cx="2.5" cy="2.5" r="1.2" fill="#111"/><circle cx="16.5" cy="2.5" r="1.2" fill="#111"/><circle cx="2.5" cy="16.5" r="1.2" fill="#111"/><circle cx="16.5" cy="16.5" r="1.2" fill="#111"/><path d="M8.5 8v9l2.2-2 1.6 3.4 1.4-0.7-1.6-3.2h3z" fill="#fff" stroke="#111" stroke-width="0.9"/></svg>
 <svg class="abs" style="left:149px;top:164px" width="9" height="6"><path d="M0.5 0.5h7.4l-3.7 4.6z" fill="#111"/></svg>
 <!-- panel header -->
 <div class="abs" style="left:5px;top:67px;width:228px;height:21px;border:1px solid #d4d8dc;box-sizing:border-box;background:#f0f0f0"></div>
 <div class="t b" style="left:45.5px;top:71px;letter-spacing:-0.17px;">Valinta: Rel.:0/Polut:3/Pisteet:0</div>
 <div class="white" style="left:5px;top:89px;width:228px;height:63px;border:1px solid #9aa;box-sizing:border-box"></div>
 <div class="t b" style="left:27px;top:93px;">Rannikkotie (3 pistettä)</div>
 <div class="t b" style="left:27px;top:111px;">Rannikkotie (2 pistettä)</div>
 <div class="t b" style="left:27px;top:129px;">Rannikkotie (8 pistettä)</div>
 <div class="btn" style="left:6px;top:154px;width:160px;height:24px;"></div>
 <div class="btn" style="left:166px;top:154px;width:80px;height:24px;"></div>
 <div class="t b" style="left:78px;top:160px;">Valitse</div>
 <div class="abs" style="left:227px;top:159px;width:10px;height:14px;border:1px solid #a8a8a8;border-radius:2px;background:#e4e4e4;z-index:3"></div>
</div>

<div id="dlg">
 <div id="title"></div><div id="bl"></div><div id="br"></div>
<svg class="abs" style="left:5px;top:8px" width="17" height="17" viewBox="0 0 17 17"><rect x="1" y="0.500" width="14.500" height="12" fill="#cfe6b4"/><path d="M1 0.500h5v5h-5z" fill="#f2f2c8"/><path d="M8 0.500h7.500v7h-5z" fill="#b4d8a0"/><path d="M1 1l2 1M5 0.500l2 2M9 1l1.500 1M13 0.500l2 2.500M14.500 5l1 3M1 6l1.500 2" stroke="#1a1a1a" stroke-width="1.200"/><path d="M7 8h8.500v7h-8.500z" fill="#f4f4f4"/><path d="M9 11.500c2 1.200 4 1.200 6 0v1.500c-2 1-4 1-6 0z" fill="#4a2a18"/><path d="M0.500 15.500l1-3.500 6-6.500 2.500 2.500-6 6.500z" fill="#8a5a10"/><path d="M5 8l2.500 2.500" stroke="#e8d040" stroke-width="1.500"/></svg>
 <div class="t b" style="left:25px;top:10px;font-size:13px;letter-spacing:0.03px;color:#fff;text-shadow:1px 1px 1px #103080;line-height:16px;">Create new relation in layer 'Datataso 1'</div>
<div class="abs" style="left:673px;top:7px;width:19px;height:19px;border:1px solid #f0d0c8;border-radius:3px;box-sizing:border-box;background:linear-gradient(135deg,#eeb0a0 0%,#dc6a48 45%,#c84a24 100%);"></div>
 <svg class="abs" style="left:673px;top:7px" width="19" height="19"><path d="M5 5l9 9M14 5l-9 9" stroke="#fff" stroke-width="2.200" stroke-linecap="round"/></svg>
</div>

<div id="cont" class="abs" style="left:0;top:0;width:769px;height:534px;overflow:hidden;">
 <!-- tabs -->
 <svg class="abs" style="left:70px;top:214px" width="400" height="26" viewBox="70 214 400 26">
  <defs><linearGradient id="tabg" x1="0" y1="0" x2="0" y2="1"><stop offset="0" stop-color="#c6d6ea"/><stop offset="1" stop-color="#e2eaf4"/></linearGradient></defs>
  <path d="M76.500 236.500V222.500L82 216.500H205.500V236.500" fill="url(#tabg)" stroke="#8790a0" stroke-width="1"/>
  <path d="M77.500 236V223L82.500 217.500H204.500" fill="none" stroke="#fff" stroke-width="1" opacity="0.8"/>
  <path d="M205.500 224L211.500 217.500H320.500V235.500H205.500" fill="#eeeeee" stroke="#8f98a4" stroke-width="1"/>
  <path d="M320.500 224L326.500 217.500H424.500V235.500H320.500" fill="#eeeeee" stroke="#8f98a4" stroke-width="1"/>
  <path d="M424.500 235.500H470" stroke="#c8d0d8" stroke-width="1"/>
 </svg>
 <div class="hline" style="left:425px;top:235px;width:337px;background:#d0d6dc"></div>
 <div class="hline" style="left:76px;top:236px;width:686px;background:#fafafa"></div>
 <div class="t b" style="left:86px;top:219px;">Tags and Members</div>
 <div class="t b" style="left:214.500px;top:219px;">Parent Relations</div>
 <div class="t b" style="left:329px;top:219px;">Child Relations</div>
 <!-- Tagit panel -->
 <div class="abs" style="left:77px;top:241px;width:685px;height:114px;border:1px solid #8a96a2;box-sizing:border-box;"></div>
 <div class="t b" style="left:77.500px;top:244px;">Tagit</div>
 <div class="btn" style="left:78px;top:258px;width:58px;height:34px;"></div>
 <div class="btn" style="left:78px;top:291px;width:58px;height:35px;"></div>
 <svg class="abs" style="left:98.5px;top:267px" width="17" height="17"><use href="#plus"/></svg>
 <svg class="abs" style="left:95px;top:295px" width="24" height="28" viewBox="0 0 24 28">
  <defs><linearGradient id="tg" x1="0" x2="1"><stop offset="0" stop-color="#6a6e6e"/><stop offset="0.3" stop-color="#c4c8c6"/><stop offset="0.6" stop-color="#8e9290"/><stop offset="1" stop-color="#4e5252"/></linearGradient>
  <linearGradient id="tl" x1="0" x2="1"><stop offset="0" stop-color="#8a8e8c"/><stop offset="0.35" stop-color="#e0e4e2"/><stop offset="1" stop-color="#5a5e5c"/></linearGradient></defs>
  <ellipse cx="12" cy="24.5" rx="9.5" ry="2.5" fill="#000" opacity="0.25"/>
  <path d="M3.800 10l1.200 12.500c0 1.600 3 2.800 7 2.800s7-1.200 7-2.800L20.200 10z" fill="url(#tg)"/>
  <path d="M7 13.500l0.500 10M9.500 14v10.500M12 14v10.800M14.500 14v10.500M17 13.500l-0.500 10" stroke="#4a4e4c" stroke-width="0.800" opacity="0.700"/>
  <path d="M2.5 6.5v4c0 1.8 4.2 3.2 9.5 3.2s9.500-1.400 9.500-3.200v-4z" fill="url(#tl)"/>
  <ellipse cx="12" cy="6.500" rx="9.500" ry="4.200" fill="#a4a8a6" stroke="#5a5e5c" stroke-width="0.700"/>
  <ellipse cx="12.500" cy="5.800" rx="3.400" ry="1.800" fill="#3a3e3c"/>
  <ellipse cx="12.800" cy="5.300" rx="2" ry="0.900" fill="#8a8e8c"/>
 </svg>
 <div class="abs" style="left:136px;top:258px;width:622px;height:96px;border:1px solid #7a8a99;box-sizing:border-box;"></div>
 <div class="white" style="left:137px;top:275px;width:620px;height:47px;"></div>
 <div class="hline" style="left:137px;top:274px;width:620px;"></div>
 <div class="hline" style="left:137px;top:290px;width:620px;"></div>
 <div class="hline" style="left:137px;top:306px;width:620px;"></div>
 <div class="hline" style="left:137px;top:322px;width:620px;"></div>
 <div class="vline" style="left:446px;top:259px;height:64px;"></div>
 <div class="vline" style="left:757px;top:259px;height:64px;"></div>
 <div class="abs" style="left:137px;top:291px;width:308px;height:15px;border:1px solid #7a8a99;box-sizing:border-box;"></div>
 <div class="abs" style="left:139px;top:292px;width:29px;height:13px;background:#b8cfe5;"></div>
 <div class="t" style="left:278px;top:261px;">Avain</div>
 <div class="t" style="left:591px;top:261px;">Arvo</div>
 <div class="t b" style="left:141px;top:276px;">type</div>
 <div class="t" style="left:140px;top:293px;">route</div>
 <div class="t b" style="left:451px;top:276px;">route</div>
 <div class="t b" style="left:451px;top:292px;">bus</div>
 <!-- splitter -->
 <svg class="abs" style="left:76px;top:357px" width="686" height="6"><rect width="686" height="6" fill="url(#bump)"/></svg>
 <svg class="abs" style="left:80px;top:356px" width="24" height="7"><rect width="23" height="7" fill="#eee"/><path d="M1 5l4-3.500 4 3.500z" fill="#5a5e9a"/><path d="M13 1.500h8l-4 3.500z" fill="#5a5e9a"/></svg>
 <!-- Jasenet panel -->
 <div class="abs" style="left:77px;top:364px;width:405px;height:180px;border:1px solid #8a96a2;box-sizing:border-box;"></div>
 <div class="hline" style="left:78px;top:365px;width:403px;background:#b4bcc4"></div>
 <div class="t b" style="left:79px;top:368px;">Jäsenet</div>
 <div class="btn dis" style="left:85px;top:382px;width:57px;height:35px;"></div>
 <div class="btn dis" style="left:85px;top:416px;width:57px;height:35px;"></div>
 <div class="btn dis" style="left:85px;top:450px;width:57px;height:35px;"></div>
 <div class="btn dis" style="left:85px;top:484px;width:57px;height:35px;"></div>
 <div class="btn dis" style="left:85px;top:518px;width:57px;height:35px;"></div>
 <div class="abs" style="left:148px;top:383px;width:331px;height:170px;border:1px solid #7a8a99;box-sizing:border-box;"></div>
 <div class="hline" style="left:149px;top:398px;width:329px;"></div>
 <div class="vline" style="left:227px;top:384px;height:15px;"></div>
 <div class="vline" style="left:459px;top:384px;height:15px;"></div>
 <div class="t" style="left:174px;top:385px;">Rooli</div>
 <div class="t" style="left:318px;top:385px;">Refers to</div>
 <!-- vertical splitter -->
 <svg class="abs" style="left:484px;top:364px" width="4" height="180"><rect width="4" height="180" fill="url(#bump)"/></svg>
 <div class="abs" style="left:489px;top:364px;width:273px;height:180px;border:1px solid #8a96a2;box-sizing:border-box;"></div>
 <!-- Valinta panel -->
 <div class="t b" style="left:489px;top:368px;">Valinta</div>
 <div class="btn" style="left:495px;top:382px;width:58px;height:34px;"></div>
 <div class="btn dis" style="left:495px;top:415px;width:58px;height:35px;"></div>
 <div class="btn dis" style="left:495px;top:449px;width:58px;height:35px;"></div>
 <div class="btn dis" style="left:495px;top:487px;width:58px;height:35px;"></div>
 <div class="btn dis" style="left:495px;top:521px;width:58px;height:35px;"></div>
 <div class="abs" style="left:558px;top:383px;width:200px;height:170px;border:1px solid #7a8a99;box-sizing:border-box;"></div>
 <div class="white" style="left:559px;top:399px;width:198px;height:47px;"></div>
 <div class="hline" style="left:559px;top:398px;width:198px;"></div>
 <div class="hline" style="left:559px;top:414px;width:198px;"></div>
 <div class="hline" style="left:559px;top:430px;width:198px;"></div>
 <div class="hline" style="left:559px;top:446px;width:198px;"></div>
 <div class="t" style="left:641px;top:385px;">Valinta</div>
 <div class="t b" style="left:578px;top:400px;">Rannikkotie (8 pistettä)</div>
 <div class="t b" style="left:578px;top:416px;">Rannikkotie (2 pistettä)</div>
 <div class="t b" style="left:578px;top:432px;">Rannikkotie (3 pistettä)</div>

 <svg class="abs" style="left:103px;top:388px" width="24" height="24"><use href="#pg"/><path d="M12 4c5 0 7 2 7 4.500s-2 4-5 4v2.500l-4-4 4-4v2.500c2 0 3-0.500 3-1.500s-2-2-5-2z" fill="#d8d8d8"/></svg>
 <svg class="abs" style="left:103px;top:422px" width="24" height="24"><use href="#pg"/><path d="M12 8c5 0 7 2 7 4.500s-2 4-5 4v2.500l-4-4 4-4v2.500c2 0 3-0.500 3-1.500s-2-2-5-2z" fill="#d8d8d8"/></svg>
 <svg class="abs" style="left:105px;top:456px" width="24" height="24"><use href="#pg"/><path d="M12 6l5 4-5 4z" fill="#d8d8d8"/></svg>
 <svg class="abs" style="left:104px;top:489px" width="22" height="26"><path d="M2 6v14c0 2 4 3 8 3s8-1 8-3V6z" fill="#dadada"/><ellipse cx="10" cy="6" rx="9" ry="3.500" fill="#e0e0e0" stroke="#d4d4d4"/></svg>
 <svg class="abs" style="left:101px;top:523px" width="30" height="12"><rect x="1" y="4" width="8" height="8" fill="#dadada"/><path d="M12 6l5 5v2h-5z" fill="#d4d4d4"/><rect x="17" y="1" width="6" height="6" fill="#e6e6e6" stroke="#d0d0d0"/></svg>
 <!-- active button icon -->
 <svg class="abs" style="left:513px;top:388px" width="24" height="22"><rect x="1" y="1" width="12" height="20" fill="#fff" stroke="#909498" stroke-width="1"/><rect x="1.500" y="15.500" width="11" height="5" fill="#f8a0a8"/><path d="M1 5.900h12M1 10.800h12M1 15.500h12" stroke="#909498" stroke-width="1"/><path d="M13.700 10.500L21.500 2.800v15.600z" fill="#000090"/></svg>
 <svg class="abs" style="left:513px;top:421px" width="32" height="26"><rect x="1" y="2" width="8" height="20" fill="#dcdcdc"/><path d="M10 12l6-5v10z" fill="#d6d6d6"/><rect x="20" y="3" width="6" height="6" fill="#eee" stroke="#d0d0d0"/><path d="M23 9v10" stroke="#d4d4d4" stroke-width="1.500"/><rect x="20" y="19" width="6" height="4" fill="#ddd"/></svg>
 <svg class="abs" style="left:513px;top:455px" width="32" height="26"><path d="M1 2h7v20h-7z" fill="#dedede" stroke="#d4d4d4"/><path d="M1 2l7 20" stroke="#d0d0d0"/><rect x="16" y="3" width="5" height="5" fill="#eee" stroke="#d0d0d0"/><path d="M18.500 8v9" stroke="#d4d4d4" stroke-width="1.500"/><rect x="16" y="17" width="5" height="5" fill="#eee" stroke="#d0d0d0"/></svg>
 <svg class="abs" style="left:513px;top:493px" width="32" height="26"><rect x="1" y="2" width="10" height="20" fill="#dcdcdc"/><path d="M12 12l8-7v14z" fill="#d6d6d6"/></svg>
 <svg class="abs" style="left:513px;top:527px" width="32" height="10"><rect x="1" y="2" width="10" height="8" fill="#dcdcdc"/><path d="M14 10l6-6v6z" fill="#d6d6d6"/></svg>
 <svg class="abs" style="left:560px;top:399px" width="16" height="16"><use href="#way"/></svg>
 <svg class="abs" style="left:560px;top:415px" width="16" height="16"><use href="#way"/></svg>
 <svg class="abs" style="left:560px;top:431px" width="16" height="16"><use href="#way"/></svg>
 <!-- red circle -->
 <svg class="abs" style="left:470px;top:345px" width="110" height="110"><circle cx="55.8" cy="52.2" r="40.6" fill="none" stroke="#c40f2e" stroke-width="3.4"/></svg>
</div>
</body></html>
